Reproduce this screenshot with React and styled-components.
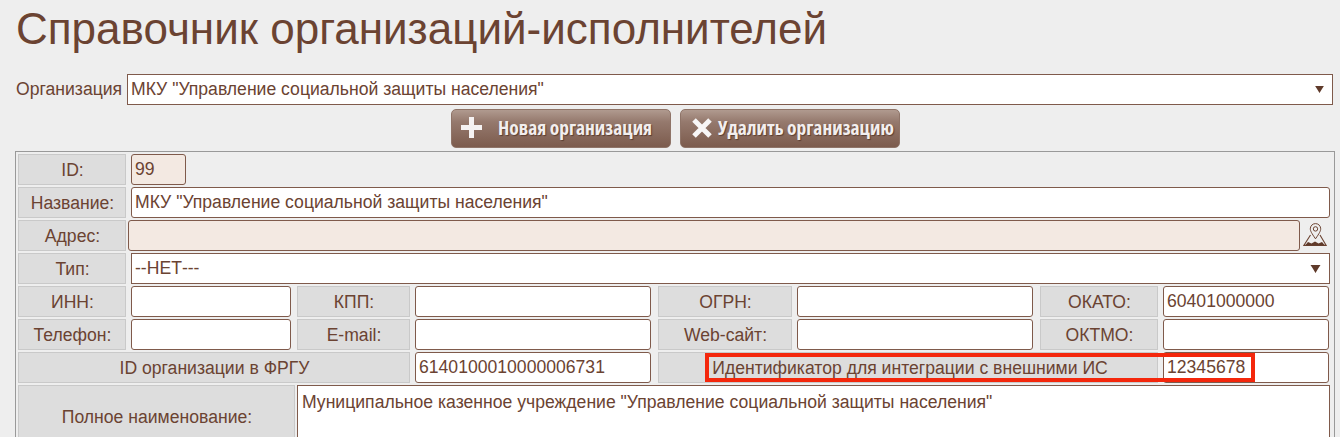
import React from "react";
import styled, { createGlobalStyle } from "styled-components";

const Global = createGlobalStyle`
  html, body { margin: 0; padding: 0; background: #eeeeee; overflow: hidden; height: 437px; }
  body { font-family: "Liberation Sans", Arial, sans-serif; font-size: 17.6px; color: #6b4332; }
  * { box-sizing: border-box; }
`;
const Page = styled.div`
  padding: 0 7px 0 15px;
  width: 1340px;
  height: 437px;
  overflow: hidden;
`;
const Title = styled.h1`
  margin: 0;
  padding-left: 1px;
  height: 74px;
  font-size: 44px;
  line-height: 57px;
  font-weight: 400;
  color: #6b4332;
`;
const OrgRow = styled.div`
  display: flex;
  align-items: center;
  height: 31px;
  padding-left: 1px;
`;
const OrgLabel = styled.label`
  width: 111px;
  flex: none;
`;
const SelectBox = styled.div`
  flex: ${(p) => (p.$grow ? "1" : "none")};
  width: ${(p) => (p.$w ? p.$w + "px" : "auto")};
  margin-left: ${(p) => p.$ml || 0}px;
  height: 31px;
  display: flex;
  align-items: center;
  justify-content: space-between;
  background: #fff;
  border: 1px solid #7f5a4b;
  padding: 0 ${(p) => p.$pr}px 0 3px;
`;
const Toolbar = styled.div`
  display: flex;
  gap: 9px;
  height: 46px;
  padding: 4px 0 0 436px;
`;
const Button = styled.button`
  width: 220px;
  height: 39px;
  display: flex;
  align-items: center;
  gap: ${(p) => p.$gap}px;
  padding: 0 0 2px ${(p) => p.$pl}px;
  border: 1px solid #8f7468;
  border-radius: 5px;
  background: linear-gradient(#b09a8f 0%, #95796d 32%, #7c5b4d 100%);
  color: #f2eeee;
  font-family: "Open Sans", sans-serif;
  font-weight: 700;
  font-stretch: 75%;
  font-size: 19.5px;
  text-shadow: 1px 1px 1px #5a3d30;
  white-space: nowrap;
`;
const Panel = styled.div`
  width: 1320px;
  height: 400px;
  border: 1px solid #999;
  padding: 2px;
  display: flex;
  flex-direction: column;
  gap: 2px;
`;
const Row = styled.div`
  display: flex;
  height: ${(p) => p.$h || 31}px;
  flex: none;
  position: relative;
`;
const Label = styled.div`
  flex: none;
  width: ${(p) => p.$w}px;
  margin-left: ${(p) => p.$ml || 0}px;
  display: flex;
  align-items: center;
  justify-content: center;
  padding: 2px 0 0 ${(p) => p.$pl ?? 1}px;
  background: #dddddd;
  border: 1px solid #c9c9c9;
  color: #6b4332;
`;
const Input = styled.input`
  flex: none;
  width: ${(p) => p.$w}px;
  margin: 0 0 0 ${(p) => p.$ml || 0}px;
  height: 31px;
  padding: 0 3px;
  border: 1px solid #7f5a4b;
  border-radius: 3px;
  background: ${(p) => (p.$tint ? "#f3e9e2" : "#fff")};
  color: #6b4332;
  font: 17.6px "Liberation Sans", Arial, sans-serif;
  outline: none;
`;
const TextArea = styled.textarea`
  flex: none;
  width: ${(p) => p.$w}px;
  margin: 0 0 0 ${(p) => p.$ml}px;
  height: 100%;
  padding: 6px 4px;
  border: 1px solid #7f5a4b;
  background: #fff;
  color: #6b4332;
  font: 17.6px "Liberation Sans", Arial, sans-serif;
  resize: none;
  outline: none;
`;
const Highlight = styled.div`
  position: absolute;
  left: 687px;
  top: 1px;
  width: 550px;
  height: 29px;
  border: 4px solid #f4270c;
  pointer-events: none;
`;
const MapBtn = styled.span`
  flex: none;
  margin-left: 3px;
  padding-bottom: 2px;
  display: flex;
  align-items: center;
`;

const Arrow = ({ w, h }) => (
  <svg width={w} height={h} viewBox="0 0 10 8" aria-hidden="true">
    <path d="M0 0h10L8 3 5 8 2 3z" fill="#5f3a2a" />
  </svg>
);
const Plus = () => (
  <svg width="21" height="21" viewBox="0 0 21 21" aria-hidden="true">
    <path d="M8 0h5v8h8v5h-8v8H8v-8H0V8h8z" fill="#f5f2f2" />
  </svg>
);
const Cross = () => (
  <svg width="22" height="22" viewBox="0 0 22 22" aria-hidden="true">
    <path d="M3 3l16 16M19 3L3 19" stroke="#f8f6f6" strokeWidth="5" fill="none" />
  </svg>
);
const MapPin = () => (
  <svg width="24" height="23" viewBox="0 0 24 23" aria-hidden="true">
    <path
      d="M12.500 .6C9.500 .6 7.300 2.900 7.300 5.800c0 2 1.200 4.300 5.200 10 4-5.700 5.200-8 5.200-10C17.700 2.900 15.500 .6 12.500 .6z"
      fill="none"
      stroke="#6b4332"
      strokeWidth="1"
    />
    <circle cx="12.500" cy="5.900" r="2.200" fill="none" stroke="#6b4332" strokeWidth="1" />
    <path d="M7.500 12L.8 22.400h22.400L17 12" fill="none" stroke="#6b4332" strokeWidth="1.100" />
    <path d="M2 22.500l3-3.500 3.500 1.500 3.500-2 3.500 2 3.500-1.500 3 3.500z" fill="#5f3a2a" />
  </svg>
);

export default function App() {
  return (
    <Page>
      <Global />
      <Title>Справочник организаций-исполнителей</Title>
      <OrgRow>
        <OrgLabel>Организация</OrgLabel>
        <SelectBox $grow $pr={8}>
          <span>МКУ "Управление социальной защиты населения"</span>
          <Arrow w={9} h={7} />
        </SelectBox>
      </OrgRow>
      <Toolbar>
        <Button $pl={9} $gap={16}>
          <Plus />
          <span>Новая организация</span>
        </Button>
        <Button $pl={10} $gap={5}>
          <Cross />
          <span>Удалить организацию</span>
        </Button>
      </Toolbar>
      <Panel>
        <Row>
          <Label $w={108}>ID:</Label>
          <Input $w={55} $ml={5} $tint defaultValue="99" />
        </Row>
        <Row>
          <Label $w={108}>Название:</Label>
          <Input $w={1199} $ml={5} defaultValue={'МКУ "Управление социальной защиты населения"'} />
        </Row>
        <Row>
          <Label $w={108}>Адрес:</Label>
          <Input $w={1172} $ml={2} $tint />
          <MapBtn>
            <MapPin />
          </MapBtn>
        </Row>
        <Row>
          <Label $w={108}>Тип:</Label>
          <SelectBox $w={1199} $ml={5} $pr={8}>
            <span>--НЕТ---</span>
            <Arrow w={11} h={8} />
          </SelectBox>
        </Row>
        <Row>
          <Label $w={108}>ИНН:</Label>
          <Input $w={160} $ml={5} />
          <Label $w={113} $ml={6}>КПП:</Label>
          <Input $w={236} $ml={5} />
          <Label $w={134} $ml={7}>ОГРН:</Label>
          <Input $w={236} $ml={5} />
          <Label $w={118} $ml={7}>ОКАТО:</Label>
          <Input $w={166} $ml={5} defaultValue="60401000000" />
        </Row>
        <Row>
          <Label $w={108}>Телефон:</Label>
          <Input $w={160} $ml={5} />
          <Label $w={113} $ml={6}>E-mail:</Label>
          <Input $w={236} $ml={5} />
          <Label $w={134} $ml={7}>Web-сайт:</Label>
          <Input $w={236} $ml={5} />
          <Label $w={118} $ml={7}>ОКТМО:</Label>
          <Input $w={166} $ml={5} />
        </Row>
        <Row>
          <Label $w={392}>ID организации в ФРГУ</Label>
          <Input $w={236} $ml={5} defaultValue="6140100010000006731" />
          <Label $w={500} $ml={7} $pl={4}>Идентификатор для интеграции с внешними ИС</Label>
          <Input $w={166} $ml={5} defaultValue="12345678" />
          <Highlight />
        </Row>
        <Row $h={62}>
          <Label $w={277}>Полное наименование:</Label>
          <TextArea
            $w={1033}
            $ml={2}
            defaultValue={'Муниципальное казенное учреждение "Управление социальной защиты населения"'}
          />
        </Row>
      </Panel>
    </Page>
  );
}
